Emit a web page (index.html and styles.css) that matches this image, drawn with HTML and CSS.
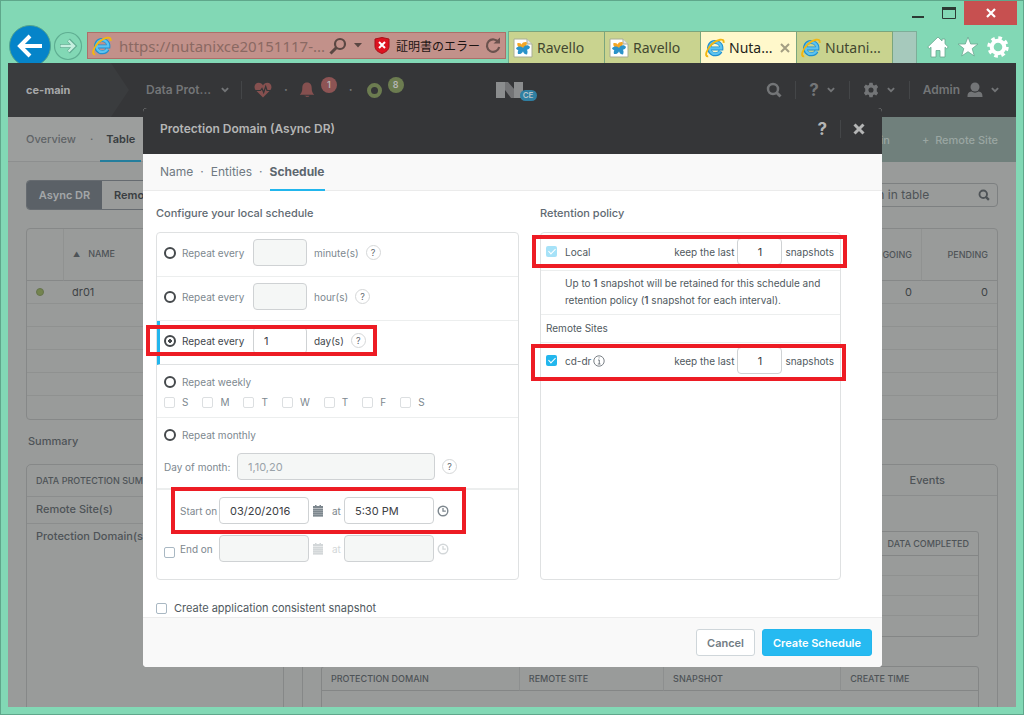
FILE: index.html
```html
<!DOCTYPE html>
<html lang="en">
<head>
<meta charset="utf-8">
<title>Protection Domain (Async DR)</title>
<link rel="stylesheet" href="styles.css">
</head>
<body>
<svg class="defs" aria-hidden="true">
  <defs>
    <symbol id="ie" viewBox="0 0 20 20">
      <path d="M15.6 13.2A6.2 6.2 0 1 1 16.4 10.6H5.2" fill="none" stroke="#1f8fd0" stroke-width="4"/>
      <path d="M15.4 13A5.9 5.9 0 1 1 16.2 10.4H5.4" fill="none" stroke="#5cc3f0" stroke-width="2.4"/>
      <path d="M3.2 18.2C-1 19 1.600 11 7 6C12 1.400 19.500-.5 18.600 4.800" fill="none" stroke="#f2b711" stroke-width="1.9"/>
    </symbol>
    <symbol id="ravello" viewBox="0 0 20 20">
      <path d="M1 1h13l5 5v13H1z" fill="#fff" stroke="#a9ae94"/>
      <path d="M14 1v5h5" fill="#e6e6e6" stroke="#a9ae94"/>
      <path d="M10 10C7.500 7 8.500 3.500 13.500 4c1 2.500-.5 5-3.500 6z" fill="#f5a623"/>
      <path d="M10 10C6 10 3.500 8 4.500 5c3.500-.5 5 1.500 5.500 5z" fill="#f5a623"/>
      <path d="M10 10c1.500-3.500 5.500-3.500 7-1-1 3.500-4.500 3.500-7 1zM10 10c4 0 5.500 3 4 6.500-3.500 0-4.500-3-4-6.500zM10 10c1 4-1.500 6.500-5 6-1-3.500 1.500-6 5-6zM10 10c-2 3-5.500 3-7 .5 1.500-2.500 5-2.500 7-.5z" fill="#2b93c9"/>
    </symbol>
    <symbol id="chev" viewBox="0 0 8 8"><path d="M1.500 2.500 4 5l2.500-2.500" fill="none" stroke="currentColor" stroke-width="1.500"/></symbol>
    <symbol id="search" viewBox="0 0 16 16"><circle cx="7" cy="7" r="5" fill="none" stroke="currentColor" stroke-width="2.500"/><path d="m10.500 10.500 4 4" stroke="currentColor" stroke-width="3"/></symbol>
    <symbol id="gear" viewBox="0 0 20 20"><path fill-rule="evenodd" fill="currentColor" d="M8 1h4l.6 2.600 1.500.7 2.500-1.200 2.300 3.300-1.700 1.900v3.400l1.700 1.900-2.300 3.300-2.500-1.200-1.500.7L12 19H8l-.6-2.600-1.500-.7-2.500 1.200-2.300-3.300 1.700-1.900V8.300L1.100 6.400l2.300-3.300 2.500 1.200 1.500-.7zM10 6.800a3.200 3.200 0 1 0 0 6.400 3.200 3.200 0 0 0 0-6.400z"/></symbol>
    <symbol id="calendar" viewBox="0 0 12 12"><path d="M1 1h2V0h1.500v1h3V0H9v1h2v2H1zM1 4h10v1.500H1zM1 6h10v1.500H1zM1 8h10v1.500H1zM1 10h10v1.500H1z" fill="currentColor"/><path d="M1 1h10v10.500H1z" fill="currentColor" opacity=".55"/></symbol>
    <symbol id="clock" viewBox="0 0 12 12"><circle cx="6" cy="6" r="4.800" fill="none" stroke="currentColor" stroke-width="1.400"/><path d="M6 3v3.200h2.800" fill="none" stroke="currentColor" stroke-width="1.300"/></symbol>
  </defs>
</svg>

<div class="window">
  <header class="titlebar">
    <button class="win-btn" aria-label="Minimize"><svg viewBox="0 0 14 12" width="14" height="12"><path d="M1 10h12" stroke="#2c3a34" stroke-width="2"/></svg></button>
    <button class="win-btn" aria-label="Maximize"><svg viewBox="0 0 14 12" width="14" height="12"><path d="M.5 1.500h13v10H.5z" fill="none" stroke="#2c3a34"/><path d="M0 1.500h14" stroke="#2c3a34" stroke-width="3"/></svg></button>
    <button class="win-btn win-close" aria-label="Close"><svg viewBox="0 0 10 10" width="10" height="10"><path d="m1 1 8 8M9 1 1 9" stroke="#fff" stroke-width="2.200"/></svg></button>
  </header>

  <div class="browser-bar">
    <button class="back" aria-label="Back"><svg viewBox="0 0 42 42" width="42" height="42"><circle cx="21" cy="21" r="20.500" fill="#0584c9" stroke="#55a58e"/><path d="M33 21H12M21 11 11 21l10 10" fill="none" stroke="#fff" stroke-width="4"/></svg></button>
    <button class="forward" aria-label="Forward"><svg viewBox="0 0 30 30" width="30" height="30"><circle cx="15" cy="15" r="13.500" fill="none" stroke="#5fae92" stroke-width="1.200"/><path d="M7 15h14M15.500 9l6 6-6 6" fill="none" stroke="#61ac92" stroke-width="4"/><path d="M7.500 15H21M15.500 9.500 21 15l-5.500 5.500" fill="none" stroke="#c5efdf" stroke-width="2.400"/></svg></button>
    <div class="address">
      <svg class="ic20" aria-hidden="true"><use href="#ie"/></svg>
      <input class="url" aria-label="Address" value="https://nutanixce20151117-...">
      <svg viewBox="0 0 18 18" width="18" height="18"><circle cx="11" cy="7" r="5" fill="none" stroke="#5b4743" stroke-width="2.200"/><path d="M7.500 10.500 1.500 16.500" stroke="#5b4743" stroke-width="3"/></svg>
      <svg class="caret" viewBox="0 0 8 5" width="8" height="5"><path d="M0 0h8L4 4.500z" fill="#5b4743"/></svg>
      <svg class="shield" viewBox="0 0 16 17" width="16" height="17"><path d="M8 .5 15 2v7c0 4-3 6-7 7.500C4 15 1 13 1 9V2z" fill="#dd1320" stroke="#a80f18"/><path d="m5 5 6 6M11 5l-6 6" stroke="#fff" stroke-width="2"/></svg>
      <span class="cert">証明書のエラー</span>
      <svg viewBox="0 0 18 18" width="18" height="18"><path d="M14.500 5.500A6.200 6.200 0 1 0 15.200 10" fill="none" stroke="#6a524e" stroke-width="2.200"/><path d="M9.500 6.500h6.500V.5z" fill="#6a524e"/></svg>
    </div>
    <nav class="tabs">
      <button class="tab"><svg class="ic20"><use href="#ravello"/></svg>Ravello</button>
      <button class="tab"><svg class="ic20"><use href="#ravello"/></svg>Ravello</button>
      <button class="tab tab-active"><svg class="ic20"><use href="#ie"/></svg>Nuta...<svg class="tab-x" viewBox="0 0 10 10" width="10" height="10"><path d="m1 1 8 8M9 1 1 9" stroke="#a39e82" stroke-width="2"/></svg></button>
      <button class="tab"><svg class="ic20"><use href="#ie"/></svg>Nutani...</button>
      <button class="tab-new" aria-label="New tab"></button>
    </nav>
    <div class="tools">
      <button aria-label="Home"><svg viewBox="0 0 22 22" width="22" height="22"><path d="M11 1 0.700 11l1.800 1.600L4 11.200V21h5v-6.500h4V21h5v-9.800l1.500 1.400 1.800-1.600L18 7.800V3h-3v2z" fill="#fff" stroke="#6aa890" stroke-width=".8"/></svg></button>
      <button aria-label="Favorites"><svg viewBox="0 0 22 22" width="22" height="22"><path d="m11 1 2.700 7H21l-5.800 4.600L17.300 20 11 15.700 4.700 20l2.100-7.400L1 8h7.300z" fill="#fff" stroke="#6aa890" stroke-width=".8"/></svg></button>
      <button aria-label="Tools"><svg viewBox="0 0 22 22" width="22" height="22"><circle cx="11" cy="11" r="6.300" fill="none" stroke="#fff" stroke-width="4"/><circle cx="11" cy="11" r="9" fill="none" stroke="#fff" stroke-width="3.400" stroke-dasharray="3.600 3.470"/></svg></button>
    </div>
  </div>

  <div class="app">
    <div class="app-header">
      <div class="head-left">
        <div class="cluster">ce-main<svg class="cluster-tip" viewBox="0 0 18 54" preserveAspectRatio="none"><path d="M0 0 18 27 0 54z" fill="#3a3c3e"/></svg></div>
        <button class="head-btn section">Data Prot...<svg class="chev"><use href="#chev"/></svg></button>
        <span class="divider"></span>
        <svg class="heart" viewBox="0 0 18 16" width="18" height="16"><path d="M9 15.500 2 8.500C-1 5 1 .8 4.600.8 6.700.8 8.200 2 9 3.400 9.800 2 11.300.8 13.400.8 17 .8 19 5 16 8.500z" fill="#85504f"/><path d="M0 8.500h6.500L8 6.500l1.700 4 2-6 1.300 4h5" fill="none" stroke="#353638" stroke-width="1.200"/></svg>
        <span class="dot">·</span>
        <svg class="bell" viewBox="0 0 16 16" width="16" height="16"><path d="M8 .5c3.500 0 4.700 2.500 4.700 5.500 0 3.500.8 5 2.600 6.700H.7C2.500 11 3.300 9.500 3.300 6 3.300 3 4.500.5 8 .5zM5.500 13.700h5C10 15.300 6 15.300 5.500 13.700z" fill="#85504f"/></svg>
        <span class="count count-red">1</span>
        <span class="dot dot-b">·</span>
        <span class="ring"></span>
        <span class="count count-green">8</span>
      </div>
      <div class="logo"><svg viewBox="0 0 28 16" width="28" height="16"><path d="M9 0h3l7 8v8h-4L9 8z" fill="#737476"/><path d="M0 0h9v16H0zM18 0h9v16h-9z" fill="#8b8d8e"/></svg><span class="ce">CE</span></div>
      <div class="head-right">
        <button class="head-btn" aria-label="Search"><svg class="ic16"><use href="#search"/></svg></button>
        <span class="divider"></span>
        <button class="head-btn help-btn">?<svg class="chev"><use href="#chev"/></svg></button>
        <span class="divider"></span>
        <button class="head-btn" aria-label="Settings"><svg class="ic16"><use href="#gear"/></svg><svg class="chev"><use href="#chev"/></svg></button>
        <span class="divider"></span>
        <button class="head-btn">Admin<svg class="user" viewBox="0 0 16 16" width="16" height="16"><circle cx="8" cy="5" r="4.500" fill="currentColor"/><path d="M.5 15c0-4 1-5 4-5.500 2 1.500 5 1.500 7 0 3 .5 4 1.500 4 5.500z" fill="currentColor"/></svg><svg class="chev"><use href="#chev"/></svg></button>
      </div>
    </div>

    <div class="subnav">
      <a href="#" class="sub-link">Overview</a><span class="sub-dot">·</span><a href="#" class="sub-link sub-active">Table</a>
      <div class="sub-actions"><button>+ &nbsp;Protection Domain</button><button>+ &nbsp;Remote Site</button></div>
    </div>

    <main class="content">
      <div class="toolbar">
        <div class="segmented"><button class="seg seg-on">Async DR</button><button class="seg">Remote Site</button></div>
        <label class="table-search"><input aria-label="Search in table" value="search in table"><svg class="ic12"><use href="#search"/></svg></label>
      </div>
      <table class="grid">
        <thead><tr><th class="c-status"></th><th class="c-name"><span class="sort">▲</span>NAME</th><th class="c-num">ONGOING</th><th class="c-num">PENDING</th></tr></thead>
        <tbody>
          <tr><td><span class="status"></span></td><td class="c-name">dr01</td><td class="c-num">0</td><td class="c-num">0</td></tr>
          <tr><td colspan="4"></td></tr><tr><td colspan="4"></td></tr><tr><td colspan="4"></td></tr><tr><td colspan="4"></td></tr><tr><td colspan="4"></td></tr>
        </tbody>
      </table>
      <h2 class="summary">Summary</h2>
      <div class="cards">
        <section class="card card-left">
          <h3>DATA PROTECTION SUMMARY</h3>
          <p class="kv">Remote Site(s)</p>
          <p class="kv kv-last">Protection Domain(s)</p>
        </section>
        <section class="card card-right">
          <div class="card-tabs"><button>Events</button></div>
          <table class="inner inner-a">
            <thead><tr><th>DATA COMPLETED</th></tr></thead>
            <tbody><tr><td></td></tr><tr><td></td></tr><tr><td></td></tr><tr><td></td></tr></tbody>
          </table>
          <table class="inner inner-b">
            <thead><tr><th class="w30">PROTECTION DOMAIN</th><th class="w22">REMOTE SITE</th><th class="w27">SNAPSHOT</th><th>CREATE TIME</th></tr></thead>
            <tbody><tr><td colspan="4"></td></tr></tbody>
          </table>
        </section>
      </div>
    </main>

    <div class="overlay">
      <form class="modal" role="dialog" aria-labelledby="modal-title">
        <div class="modal-head">
          <h1 id="modal-title">Protection Domain (Async DR)</h1>
          <button type="button" class="modal-help" aria-label="Help">?</button>
          <span class="divider"></span>
          <button type="button" class="modal-close" aria-label="Close"><svg viewBox="0 0 12 12" width="12" height="12"><path d="m1.500 1.500 9 9M10.500 1.500l-9 9" stroke="#b4b5b5" stroke-width="3"/></svg></button>
        </div>
        <nav class="steps"><a href="#">Name</a><span>·</span><a href="#">Entities</a><span>·</span><a href="#" class="step-on">Schedule</a></nav>

        <div class="modal-body">
          <section class="local">
            <h2>Configure your local schedule</h2>
            <div class="panel">
              <div class="row">
                <input type="radio" name="repeat" id="r-min"><label for="r-min">Repeat every</label>
                <input class="field num" disabled aria-label="Minutes"><span class="unit">minute(s)</span><span class="hint">?</span>
              </div>
              <div class="row">
                <input type="radio" name="repeat" id="r-hour"><label for="r-hour">Repeat every</label>
                <input class="field num" disabled aria-label="Hours"><span class="unit">hour(s)</span><span class="hint">?</span>
              </div>
              <div class="row row-on">
                <input type="radio" name="repeat" id="r-day" checked><label for="r-day">Repeat every</label>
                <input class="field num" value="1" aria-label="Days"><span class="unit">day(s)</span><span class="hint">?</span>
                <span class="mark mark-day"></span>
              </div>
              <div class="row-block">
                <div class="line"><input type="radio" name="repeat" id="r-week"><label for="r-week">Repeat weekly</label></div>
                <div class="days">
                  <label><input type="checkbox" disabled>S</label><label><input type="checkbox" disabled>M</label><label><input type="checkbox" disabled>T</label><label><input type="checkbox" disabled>W</label><label><input type="checkbox" disabled>T</label><label><input type="checkbox" disabled>F</label><label><input type="checkbox" disabled>S</label>
                </div>
              </div>
              <div class="row-block row-month">
                <div class="line"><input type="radio" name="repeat" id="r-month"><label for="r-month">Repeat monthly</label></div>
                <div class="month"><label for="dom">Day of month:</label><input class="field" id="dom" placeholder="1,10,20" disabled><span class="hint">?</span></div>
              </div>
              <div class="dates">
                <div class="date">
                  <label class="date-label" for="start">Start on</label>
                  <input class="field when" id="start" value="03/20/2016"><svg class="ic12"><use href="#calendar"/></svg><span class="at">at</span>
                  <input class="field when" value="5:30 PM" aria-label="Start time"><svg class="ic12"><use href="#clock"/></svg>
                  <span class="mark mark-start"></span>
                </div>
                <div class="date date-end">
                  <input type="checkbox" class="end-check" id="end-on"><label class="date-label" for="end-on">End on</label>
                  <input class="field when" disabled aria-label="End date"><svg class="ic12"><use href="#calendar"/></svg><span class="at">at</span>
                  <input class="field when" disabled aria-label="End time"><svg class="ic12"><use href="#clock"/></svg>
                </div>
              </div>
            </div>
          </section>

          <section class="retention">
            <h2>Retention policy</h2>
            <div class="panel">
              <div class="keep">
                <input type="checkbox" id="k-local" checked disabled><label class="keep-name" for="k-local">Local</label>
                <label for="n-local">keep the last</label><input class="field" id="n-local" value="1"><span>snapshots</span>
                <span class="mark mark-local"></span>
              </div>
              <p class="info">Up to <b>1</b> snapshot will be retained for this schedule and retention policy (<b>1</b> snapshot for each interval).</p>
              <h3 class="remote-title">Remote Sites</h3>
              <div class="keep keep-remote">
                <input type="checkbox" id="k-cd" checked><label class="keep-name" for="k-cd">cd-dr<svg viewBox="0 0 12 12" width="12" height="12"><circle cx="6" cy="6" r="5.200" fill="none" stroke="#6b7278" stroke-width=".9"/><path d="M5 5h1.300v4M4.800 9h2.700M5.600 2.900h1" fill="none" stroke="#6b7278" stroke-width=".9"/></svg></label>
                <label for="n-cd">keep the last</label><input class="field" id="n-cd" value="1"><span>snapshots</span>
                <span class="mark mark-remote"></span>
              </div>
            </div>
          </section>
        </div>

        <div class="consistent"><input type="checkbox" id="consistent"><label for="consistent">Create application consistent snapshot</label></div>
        <footer class="modal-foot"><button type="button" class="btn">Cancel</button><button type="button" class="btn btn-primary">Create Schedule</button></footer>
      </form>
    </div>
  </div>
</div>
</body>
</html>
```
FILE: styles.css
```css
* { box-sizing: border-box; }
body {
  margin: 0;
  font-family: Inter, "Open Sans", sans-serif;
  font-size: 11px;
  line-height: 14px;
  color: #505960;
}
h1, h2, h3, p { margin: 0; font-size: inherit; font-weight: inherit; }
button { margin: 0; padding: 0; border: 0; background: none; font: inherit; color: inherit; }
input { margin: 0; font: inherit; color: inherit; }
a { color: inherit; text-decoration: none; }
svg { flex: none; }
.defs { position: absolute; width: 0; height: 0; }
.ic20 { width: 20px; height: 20px; }
.ic16 { width: 16px; height: 16px; }
.ic12 { width: 12px; height: 12px; }
.chev { width: 10px; height: 10px; }

/* Browser window */
.window {
  display: flex;
  flex-direction: column;
  height: 100vh;
  border: 1px solid #5fa78b;
  background: #82d8b5;
}
.titlebar { display: flex; justify-content: flex-end; align-items: flex-start; height: 30px; padding-right: 6px; }
.win-btn { display: flex; align-items: center; justify-content: center; width: 31px; height: 24px; }
.win-close { width: 53px; background: #c75050; }
.browser-bar { display: flex; align-items: stretch; height: 32px; padding: 0 14px 0 8px; font-family: "Noto Sans", "Noto Sans CJK JP", sans-serif; font-size: 14px; overflow: visible; }
.back { display: flex; align-items: center; width: 42px; margin-top: -6px; height: 42px; }
.forward { display: flex; align-items: center; width: 30px; height: 30px; margin-left: 2px; }
.address { display: flex; align-items: center; flex: 1; height: 27px; margin: 1px 2px 0 4px; padding: 0 3px 0 4px; border: 1px solid #ad6f69; background: #c2918a; min-width: 0; }
.url { flex: 1; min-width: 0; margin-left: 7px; padding: 0; border: 0; background: none; color: #8a6963; font-size: 15px; }
.caret { margin: 0 12px 0 7px; }
.cert { margin: 0 4px 0 6px; font-family: "Noto Sans CJK JP", sans-serif; font-size: 12px; line-height: 18px; color: #1d1413; white-space: nowrap; }
.tabs { display: flex; border-left: 1px solid #6fae8f; }
.tab { display: flex; align-items: center; gap: 4px; width: 96px; padding-left: 4px; border: 1px solid #7aa57d; border-width: 1px 1px 0 0; background: #c9d38f; color: #42472f; }
.tab-active { background: #fff8cb; color: #1f1f1a; }
.tab-x { margin-left: auto; margin-right: 6px; }
.tab-new { width: 24px; border: 1px solid #7dae98; border-width: 1px 1px 0 0; background: #a6c9bc; }
.tools { display: flex; align-items: center; gap: 8px; margin-left: 10px; }
.tools svg { display: block; }

/* Application page */
.app {
  position: relative;
  flex: 1;
  display: flex;
  flex-direction: column;
  min-height: 0;
  margin: 0 7px 7px;
  overflow: hidden;
  background: #999b9a;
  color: #4e5357;
}
.app-header { display: grid; grid-template-columns: 1fr auto 1fr; flex: none; height: 54px; background: #353638; color: #737577; font-size: 12px; font-weight: 600; }
.head-left, .head-right { display: flex; align-items: center; }
.head-right { justify-content: flex-end; gap: 13px; padding-right: 16px; }
.head-btn { display: flex; align-items: center; gap: 7px; }
.cluster { position: relative; display: flex; align-items: center; align-self: stretch; width: 103px; padding-left: 18px; background: #3a3c3e; color: #a6a8a9; font-weight: 700; font-size: 11px; }
.cluster-tip { position: absolute; left: 100%; top: 0; width: 18px; height: 100%; }
.section { margin-left: 35px; gap: 9px; }
.divider { width: 1px; height: 18px; background: #444648; }
.section + .divider { margin: 0 12px 0 11px; }
.dot { margin: 0 11px 0 12px; }
.count { display: flex; align-items: center; justify-content: center; width: 16px; height: 16px; margin: 0 12px 10px 6px; border-radius: 50%; font-size: 9px; color: #b5b5b5; }
.count-red { background: #8d5454; }
.count-green { background: #6c7c50; }
.dot-b { margin: 0 14px 0 0; }
.ring { width: 15px; height: 15px; border: 4px solid #6c7c50; border-radius: 50%; }
.logo { display: flex; align-items: center; padding-left: 8px; }
.ce { width: 17px; margin: 10px 0 0 -4px; border-radius: 6px; background: #2f7fa2; color: #b5c3c9; font-size: 8px; line-height: 11px; text-align: center; }
.help-btn { font-size: 17px; font-weight: 700; }

.subnav { display: flex; align-items: center; flex: none; height: 45px; padding-left: 18px; border-bottom: 1px solid #8d8f8f; background: #9c9e9d; color: #5f6366; font-weight: 500; }
.sub-dot { margin: 0 13px 0 14px; }
.sub-link { display: flex; align-items: center; }
.sub-active { align-self: stretch; margin-bottom: -1px; padding: 0 6px; margin-left: -6px; border-bottom: 2px solid #247e9d; color: #383d40; font-weight: 600; }
.sub-actions { display: flex; align-items: center; gap: 32px; align-self: stretch; margin-left: auto; margin-bottom: -1px; padding: 0 18px; background: #70807c; color: #9aa6a2; }

.content { padding: 18px 18px 0; }
.toolbar { display: flex; align-items: center; justify-content: space-between; height: 30px; margin-bottom: 18px; }
.segmented { display: flex; height: 30px; border: 1px solid #666b70; border-radius: 4px; overflow: hidden; font-weight: 600; font-size: 11px; }
.seg { width: 90px; padding: 0 12px; color: #3a3e42; text-align: left; }
.seg-on { width: 75px; background: #5b6167; color: #a3a6a8; text-align: center; padding: 0; }
.table-search { display: flex; align-items: center; width: 160px; height: 24px; padding: 0 7px; border: 1px solid #7d8081; border-radius: 4px; }
.table-search input { flex: 1; min-width: 0; padding: 0; border: 0; background: none; font-size: 12px; }
.grid { width: 100%; border: 1px solid #868888; border-radius: 4px; border-spacing: 0; table-layout: fixed; }
.grid th { height: 52px; border-bottom: 1px solid #868888; border-left: 1px solid #909291; font-size: 9px; font-weight: 500; text-align: left; }
.grid th:first-child { border-left: 0; }
.grid td { height: 23px; padding: 0; border-bottom: 1px solid #8f9190; color: #3f4346; }
.grid tr:last-child td { border-bottom: 0; }
.grid .c-status { width: 36px; }
.grid .c-name { width: auto; padding: 0 9px; }
.grid .c-num { width: 76px; padding: 0 9px; text-align: right; }
.sort { margin-right: 8px; font-size: 7px; }
.status { display: block; width: 8px; height: 8px; margin-left: 9px; border-radius: 50%; border: 1px solid #66744d; background: #74844f; }
.summary { margin: 14px 2px 16px; font-weight: 500; }
.cards { display: flex; align-items: stretch; gap: 18px; }
.card { height: 300px; border: 1px solid #868888; border-radius: 5px; }
.card-left { width: 258px; }
.card-right { flex: 1; padding: 0 18px; }
.card h3 { padding: 9px 9px 8px; border-bottom: 1px solid #8b8d8d; font-size: 9px; font-weight: 500; white-space: nowrap; }
.kv { padding: 5px 9px 7px; border-bottom: 1px solid #8b8d8d; font-weight: 500; }
.kv-last { border-bottom: 0; }
.card-tabs { display: flex; justify-content: flex-end; height: 31px; margin: 0 -18px 35px; padding-right: 52px; border-bottom: 1px solid #8b8d8d; font-weight: 500; }
.inner { width: 100%; border: 1px solid #848686; border-radius: 3px; border-spacing: 0; font-size: 9px; }
.inner th { height: 24px; padding: 0 9px; border-bottom: 1px solid #848686; font-weight: 500; text-align: left; }
.inner-a { margin-bottom: 29px; }
.inner-a th { text-align: right; }
.inner td { height: 20px; padding: 0; border-bottom: 1px solid #8f9190; }
.inner tr:last-child td { border-bottom: 0; }
.inner-b th + th { border-left: 1px solid #8d8f8f; }
.w30 { width: 30%; }
.w22 { width: 22%; }
.w27 { width: 27%; }

/* Modal dialog */
.overlay { position: absolute; inset: 0; display: flex; justify-content: center; align-items: flex-start; padding: 45px 0 0 1px; }
.modal { display: flex; flex-direction: column; width: 739px; border-radius: 4px; overflow: hidden; background: #fff; color: #505960; }
.modal-head { display: flex; align-items: center; height: 46px; padding: 0 17px 5px; background: #353638; color: #b4b5b5; }
.modal-head h1 { margin-right: auto; font-size: 12px; font-weight: 600; }
.modal-help { margin-right: 13px; font-size: 17px; font-weight: 700; }
.modal-close { display: flex; margin-left: 12px; }
.steps { display: flex; align-items: center; gap: 7px; height: 37px; padding-left: 17px; border-bottom: 1px solid #ebebeb; background: #f9f9f9; font-size: 12px; color: #707a82; }
.step-on { display: flex; align-items: center; align-self: stretch; margin-bottom: -1px; border-bottom: 2px solid #22b6ed; font-weight: 700; color: #5d676f; }
.modal-body { display: flex; gap: 21px; padding: 15px 41px 21px 13px; }
.local { flex: 363; }
.retention { flex: 301; display: flex; flex-direction: column; }
.retention .panel { flex: 1; }
.modal-body h2 { margin-bottom: 11px; font-size: 11px; line-height: 15px; font-weight: 500; color: #5f6a72; }
.panel { border: 1px solid #dfe1e2; border-radius: 4px; font-size: 10px; }
.local .panel { color: #7d888f; }
.row { position: relative; display: flex; align-items: center; padding: 6px 6px 10px 7px; border-bottom: 1px solid #eceeee; }
.row label { width: 71px; margin-left: 6px; white-space: nowrap; }
.row-on { padding-left: 4px; border-left: 3px solid #22b6ed; border-bottom-color: #dfe1e2; color: #3f464c; }
.field { height: 27px; padding: 0 10px; border: 1px solid #cfd2d4; border-radius: 4px; background: #fff; color: #3c4044; font-size: 11px; }
.field:disabled { background: #f5f7f6; }
.field::placeholder { color: #9aa3a9; opacity: 1; }
.num { width: 54px; }
.unit { margin: 0 7px; }
.hint { display: flex; align-items: center; justify-content: center; width: 15px; height: 15px; border: 1px solid #d5d7d8; border-radius: 50%; font-size: 9px; color: #5f686f; }
input[type="radio"] { appearance: none; width: 12px; height: 12px; border: 2px solid #45494c; border-radius: 50%; background: #fff; }
input[type="radio"]:checked { background: radial-gradient(circle, #45494c 2px, #fff 2px); }
input[type="checkbox"] { appearance: none; flex: none; width: 11px; height: 11px; border: 1px solid #a9b8c3; border-radius: 2px; background: #fff; }
input[type="checkbox"]:disabled { border-color: #dcdfe1; }
.row-block { padding: 10px 7px 8px; border-bottom: 1px solid #eceeee; }
.line { display: flex; align-items: center; gap: 6px; }
.days { display: flex; gap: 14px; margin-top: 6px; }
.days label { display: flex; align-items: center; gap: 7px; }
.row-month { border-bottom: 2px solid #eceeee; }
.month { display: flex; align-items: center; margin-top: 11px; }
.month label { width: 73px; white-space: nowrap; }
.month .field { width: 198px; margin-right: 7px; }
.dates { display: flex; flex-direction: column; gap: 11px; padding: 7px 7px 17px; }
.date { position: relative; display: flex; align-items: center; padding-left: 16px; color: #7d878e; }
.date-label { width: 39px; white-space: nowrap; }
.when { width: 90px; margin-right: 3px; }
.at { margin: 0 2px 0 8px; width: 10px; }
.date-end { padding-left: 0; }
.date-end .at, .date-end svg { color: #d3d7d9; }
.end-check { margin: 8px 5px 0 0; }

.keep { position: relative; display: flex; align-items: center; padding: 5px 6px 5px 5px; border-bottom: 1px solid #eceeee; }
.keep-name { display: flex; align-items: center; gap: 2px; margin: 0 auto 0 8px; }
.keep .field { width: 45px; margin: 0 3px; padding: 0; text-align: center; }
.keep input[type="checkbox"]:checked { border: 0; background: #22b6ed; position: relative; }
.keep input[type="checkbox"]:checked::after { content: ""; position: absolute; left: 4px; top: 1px; width: 3px; height: 6px; border: solid #fff; border-width: 0 1px 1px 0; transform: rotate(45deg); }
.keep input[type="checkbox"]:disabled { opacity: 0.4; }
.info { padding: 4px 10px 5px 24px; border-bottom: 1px solid #eceeee; line-height: 17px; }
.info b { font-weight: 600; }
.remote-title { padding: 6px 5px 7px; border-bottom: 1px solid #eceeee; }
.keep-remote { padding-top: 4px; padding-bottom: 4px; border-bottom: 0; }

/* Highlight frames */
.mark { position: absolute; border: 4px solid #ed1c24; pointer-events: none; }
.mark-day { inset: 4px 141px 8px -14px; }
.mark-start { inset: -10px 45px -10px 7px; }
.mark-local { inset: 2px -7px 2px -9px; }
.mark-remote { inset: 1px -6px -3px -10px; }

.consistent { display: flex; align-items: center; gap: 7px; padding: 0 13px 2px; }
.modal-foot { display: flex; justify-content: flex-end; gap: 7px; padding: 11px 10px; border-top: 1px solid #ececec; background: #f9f9f9; }
.btn { height: 27px; padding: 0 10px; border: 1px solid #cfd6da; border-radius: 3px; background: #fff; font-weight: 600; color: #727c84; }
.btn-primary { border-color: #22b6ed; background: #26baf1; color: #fff; }
```
